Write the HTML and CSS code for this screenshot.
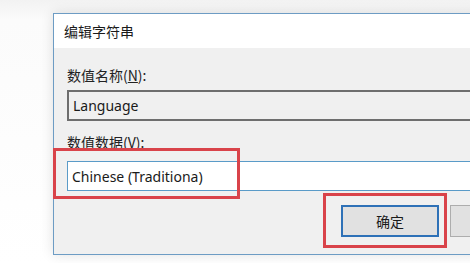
FILE: index.html
```html
<!DOCTYPE html>
<html lang="zh-CN">
<head>
    <meta charset="UTF-8">
    <title>编辑字符串</title>
    <link rel="stylesheet" href="styles.css">
</head>
<body>

<div class="dialog">
    <div class="titlebar">编辑字符串</div>
    <div class="content">
        <div class="label">数值名称(<u>N</u>):</div>
        <div class="field readonly">Language</div>

        <div class="label second">数值数据(<u>V</u>):</div>
        <div class="field focused">Chinese (Traditiona)</div>

        <div class="buttons">
            <button class="btn default">确定</button>
            <button class="btn" aria-label="取消"></button> <!-- only its edge is in view -->
        </div>
    </div>
</div>

<!-- red annotation boxes drawn over the dialog -->
<div class="mark mark-data"></div>
<div class="mark mark-ok"></div>

</body>
</html>
```

FILE: styles.css
```css
body {
    margin: 0;
    width: 470px;
    height: 263px;
    overflow: hidden;
    background: linear-gradient(#f2f2f2, #fbfbfb 20px, #ffffff);
    font-family: "Noto Sans", "Noto Sans CJK SC", sans-serif;
    position: relative;
}
.dialog {
    margin: 13px 0 0 53px;
    width: 440px;
    height: 240px;
    border: 1px solid #6d9cc4;
    border-right: none;
    background: #f0f0f0;
    box-shadow: 0 0 12px rgba(0, 0, 0, 0.12);
}
.titlebar {
    height: 34px;
    background: #ffffff;
    padding-left: 10px;
    display: flex;
    align-items: center;
    font-family: "Noto Sans CJK SC", sans-serif;
    font-size: 14px;
    color: #1a1a1a;
}
.content {
    padding: 18px 0 0 13px;
}
.label {
    font-family: "Noto Sans CJK SC", sans-serif;
    font-size: 14px;
    line-height: 18px;
    color: #222;
}
.label.second {
    margin-top: 12px;
}
.field {
    height: 27px;
    margin-top: 6px;
    padding-left: 4px;
    display: flex;
    align-items: center;
    font-size: 14px;
    color: #1a1a1a;
}
.field.readonly {
    border: 2px solid #6e6e6e;
    border-right: none;
    background: #f0f0f0;
    height: 27px;
}
.field.focused {
    margin-top: 10px;
    height: 28px;
    border: 1px solid #5a9bc8;
    border-right: none;
    background: #ffffff;
}
.buttons {
    display: flex;
    gap: 11px;
    margin: 14px 0 0 274px;
}
.btn {
    width: 98px;
    height: 32px;
    flex-shrink: 0;
    background: #e1e1e1;
    border: 1px solid #adadad;
    font-family: "Noto Sans CJK SC", sans-serif;
    font-size: 14px;
    color: #1a1a1a;
    padding: 0;
}
.btn.default {
    border: 2px solid #2e71b7;
}
.mark {
    position: absolute;
    border: 3px solid #d9434a;
}
.mark-data {
    left: 53px;
    top: 148px;
    width: 181px;
    height: 45px;
}
.mark-ok {
    left: 323px;
    top: 193px;
    width: 118px;
    height: 49px;
}
```
